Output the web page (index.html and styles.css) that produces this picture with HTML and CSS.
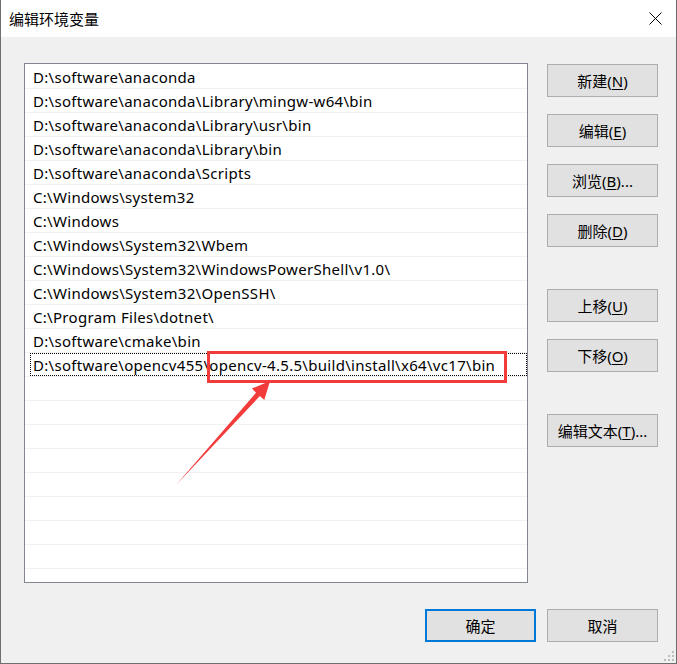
FILE: index.html
```html
<!DOCTYPE html>
<html lang="zh-CN">
<head>
<meta charset="utf-8">
<title>编辑环境变量</title>
<link rel="stylesheet" href="styles.css">
</head>
<body>
<div class="window">
  <div class="titlebar">
    <span class="title">编辑环境变量</span>
    <svg class="close" width="13" height="13" viewBox="0 0 13 13"><path d="M0.5 0.5 L12.5 12.5 M12.5 0.5 L0.5 12.5" stroke="#000" stroke-width="1" fill="none"/></svg>
  </div>
  <div class="content">
    <div class="main">
      <div class="list">
        <div class="row">D:\software\anaconda</div>
        <div class="row">D:\software\anaconda\Library\mingw-w64\bin</div>
        <div class="row">D:\software\anaconda\Library\usr\bin</div>
        <div class="row">D:\software\anaconda\Library\bin</div>
        <div class="row">D:\software\anaconda\Scripts</div>
        <div class="row">C:\Windows\system32</div>
        <div class="row">C:\Windows</div>
        <div class="row">C:\Windows\System32\Wbem</div>
        <div class="row">C:\Windows\System32\WindowsPowerShell\v1.0\</div>
        <div class="row">C:\Windows\System32\OpenSSH\</div>
        <div class="row">C:\Program Files\dotnet\</div>
        <div class="row">D:\software\cmake\bin</div>
        <div class="row focused">D:\software\opencv455\opencv-4.5.5\build\install\x64\vc17\bin</div>
        <div class="row"></div>
        <div class="row"></div>
        <div class="row"></div>
        <div class="row"></div>
        <div class="row"></div>
        <div class="row"></div>
        <div class="row"></div>
        <div class="row"></div>
        <div class="row"></div>
      </div>
      <div class="side">
        <button class="btn">新建(<u>N</u>)</button>
        <button class="btn">编辑(<u>E</u>)</button>
        <button class="btn">浏览(<u>B</u>)...</button>
        <button class="btn">删除(<u>D</u>)</button>
        <button class="btn spaced">上移(<u>U</u>)</button>
        <button class="btn">下移(<u>O</u>)</button>
        <button class="btn spaced">编辑文本(<u>T</u>)...</button>
      </div>
    </div>
    <div class="footer">
      <button class="btn default">确定</button>
      <button class="btn">取消</button>
    </div>
  </div>
  <svg class="annot" width="677" height="664" viewBox="0 0 677 664">
    <rect x="208.5" y="352.5" width="297" height="29" fill="none" stroke="#f23c3c" stroke-width="3"/>
    <polygon points="176,485 256,392.7 252,388.5 270,381 264.3,400 259.8,396.1" fill="#f23c3c"/>
  </svg>
  <svg class="grip" width="12" height="12" viewBox="0 0 12 12">
    <rect x="9" y="1" width="2" height="2" fill="#bdbdbd"/>
    <rect x="5" y="5" width="2" height="2" fill="#bdbdbd"/>
    <rect x="9" y="5" width="2" height="2" fill="#bdbdbd"/>
    <rect x="1" y="9" width="2" height="2" fill="#bdbdbd"/>
    <rect x="5" y="9" width="2" height="2" fill="#bdbdbd"/>
    <rect x="9" y="9" width="2" height="2" fill="#bdbdbd"/>
  </svg>
</div>
</body>
</html>
```
FILE: styles.css
```css
html, body {
  margin: 0;
  padding: 0;
  background: #f0f0f0;
}
body {
  width: 677px;
  height: 664px;
  overflow: hidden;
  font-family: "Noto Sans", "Noto Sans CJK SC", sans-serif;
  font-size: 15px;
  color: #000;
}
.window {
  position: relative;
  box-sizing: border-box;
  width: 677px;
  height: 664px;
  border-left: 1px solid #6e6e6e;
  border-right: 1px solid #6e6e6e;
  border-bottom: 1px solid #6e6e6e;
  background: #f0f0f0;
  display: flex;
  flex-direction: column;
}
.titlebar {
  height: 37px;
  background: #fff;
  display: flex;
  align-items: center;
  padding-left: 8px;
}
.title {
  font-family: "Noto Sans CJK SC", sans-serif;
  font-size: 15px;
  line-height: 20px;
}
.close {
  margin-left: auto;
  margin-right: 14px;
  display: block;
}
.content {
  padding: 26px 18px 0 23px;
  display: flex;
  flex-direction: column;
}
.main {
  display: flex;
  gap: 19px;
}
.list {
  box-sizing: border-box;
  width: 504px;
  height: 520px;
  border: 1px solid #828790;
  background: #fff;
  padding-top: 1px;
  overflow: hidden;
}
.row {
  position: relative;
  box-sizing: border-box;
  height: 24px;
  border-bottom: 1px solid #f0f0f0;
  padding: 1px 0 0 8px;
  line-height: 22px;
  letter-spacing: 0.3px;
  white-space: nowrap;
}
.row.focused::before {
  content: "";
  position: absolute;
  left: 5px;
  right: 0;
  top: 0;
  bottom: 0;
  border: 1px dotted #000;
}
.side {
  display: flex;
  flex-direction: column;
  gap: 17px;
  margin-top: 1px;
}
.btn {
  box-sizing: border-box;
  width: 111px;
  height: 33px;
  margin: 0;
  padding: 0;
  border: 1px solid #adadad;
  background: #e1e1e1;
  font-family: "Noto Sans", "Noto Sans CJK SC", sans-serif;
  font-size: 15px;
  color: #000;
  line-height: 20px;
}
.btn u {
  text-decoration-thickness: 1px;
  text-underline-offset: 2px;
}
.btn.spaced {
  margin-top: 25px;
}
.btn.default {
  border: 2px solid #0078d7;
}
.footer {
  display: flex;
  justify-content: flex-end;
  gap: 11px;
  margin-top: 26px;
}
.annot {
  position: absolute;
  left: -1px;
  top: 0;
  pointer-events: none;
}
.grip {
  position: absolute;
  right: 1px;
  bottom: 1px;
}
```
